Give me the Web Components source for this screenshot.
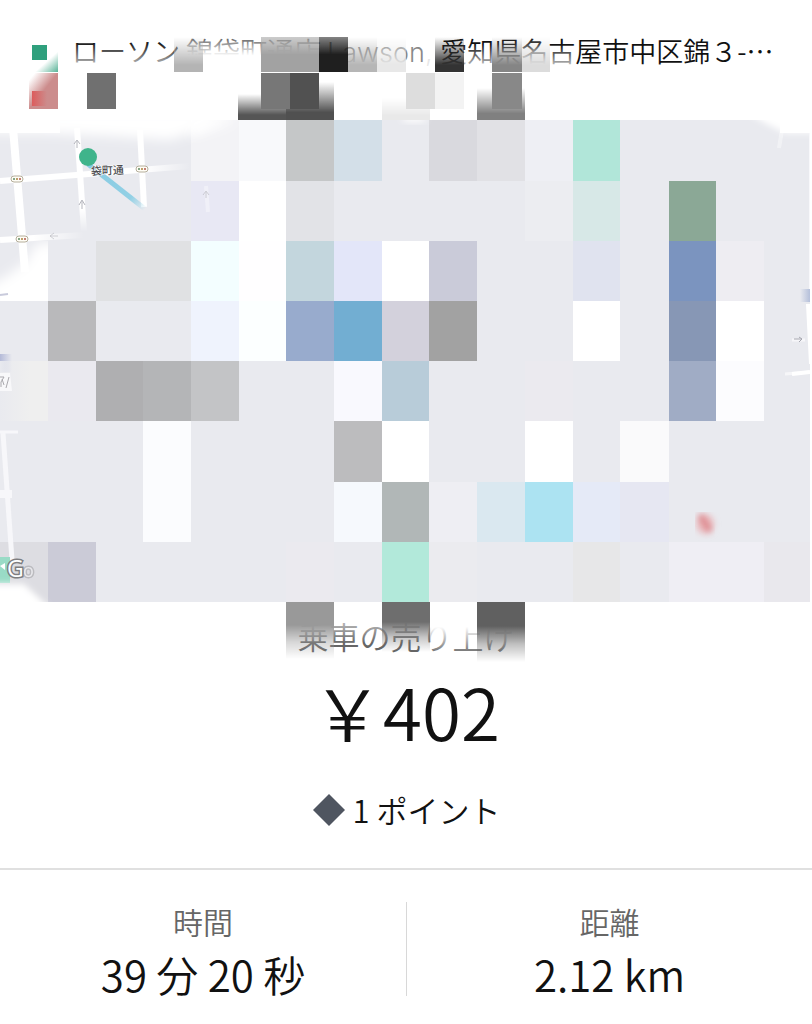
<!DOCTYPE html>
<html lang="ja">
<head>
<meta charset="utf-8">
<meta name="viewport" content="width=device-width, initial-scale=1">
<title>乗車の詳細</title>
<style>
body{
    margin: 0;
    background: #fff;
    color: #111;
    font-family: "Noto Sans CJK JP", sans-serif;
    font-weight: 350;
}
.latin{
    font-family: Inter, sans-serif;
    font-weight: 300;
}
</style>
</head>
<body>
<trip-page>
    <trip-stops slot="stops">ローソン 錦袋町通店 <span class="latin">Lawson, </span>愛知県名古屋市中区錦３-…</trip-stops>
    <trip-map slot="map" street="袋町通"></trip-map>
    <trip-fare slot="fare" label="乗車の売り上げ" amount="￥402">1 ポイント</trip-fare>
    <trip-metric label="時間">39 分 20 秒</trip-metric>
    <trip-metric label="距離">2.12 km</trip-metric>
</trip-page>

<script>
const pageStyle = `
:host{
    display: block;
}
.metrics{
    display: grid;
    grid-template-columns: 1fr 1fr;
    padding: 32px 0 28px;
    border-top: 2px solid #e0e0e0;
}
::slotted(trip-metric:last-of-type){
    border-left: 1px solid #d8d8d8;
}
`

class TripPage extends HTMLElement{
    constructor(){
        super();
        this._shadowroot = this.attachShadow({mode:'open'})
    }
    connectedCallback(){
        this._shadowroot.innerHTML = `
        <style>${pageStyle}</style>
        <main>
            <slot name="stops"></slot>
            <slot name="map"></slot>
            <slot name="fare"></slot>
            <div class="metrics"><slot></slot></div>
        </main>
        `
    }
}

const stopsStyle = `
:host{
    display: block;
    position: relative;
    box-sizing: border-box;
    min-height: 120px;
    padding: 31px 0 0 32px;
}
.stop{
    display: flex;
    align-items: center;
    gap: 25px;
    font-size: 27px;
    line-height: 40px;
}
.mark{
    flex: none;
    width: 15px;
    height: 15px;
    background: #2fa07d;
}
.name{
    white-space: nowrap;
}
.veil{
    position: absolute;
    left: 0;
    top: 0;
    width: 100%;
}
`

class TripStops extends HTMLElement{
    constructor(){
        super();
        this._shadowroot = this.attachShadow({mode:'open'})
    }
    connectedCallback(){
        // x, y, width, height, colour, fill type
        const cells = [
            [174, 37, 29, 35, '#b4b4b4', 'fade'],
            [261, 37, 58, 35, '#a2a2a2', 'half'],
            [319, 37, 29, 35, '#1f1f1f', 'half'],
            [348, 37, 29, 35, '#b6b6b6', 'fade'],
            [377, 37, 29, 35, '#e8e8e8', 'fade'],
            [435, 37, 29, 35, '#333333', 'fade'],
            [492, 37, 30, 35, '#858585', 'fade'],
            [522, 37, 28, 35, '#dcdcdc', 'fade'],
            [87, 73, 29, 36, '#707070', 'full'],
            [238, 94, 48, 26, '#555555', 'fade'],
            [286, 82, 48, 38, '#505050', 'fade'],
            [261, 73, 29, 36, '#777777', 'full'],
            [290, 73, 29, 36, '#515151', 'full'],
            [382, 98, 48, 22, '#e9e9e9', 'fade'],
            [406, 73, 29, 36, '#dddddd', 'full'],
            [435, 73, 29, 36, '#f3f3f3', 'full'],
            [477, 88, 48, 32, '#808080', 'fade'],
            [492, 73, 30, 36, '#888888', 'full']
        ]
        const masks = {fade:'url(#m-fade)', half:'url(#m-half)', full:'none'}
        this._shadowroot.innerHTML = `
        <style>${stopsStyle}</style>
        <div class="stop"><span class="mark"></span><span class="name"><slot></slot></span></div>
        <svg class="veil" viewBox="0 0 812 120" aria-hidden="true">
            <defs>
                <linearGradient id="g-fade" x1="0" y1="0" x2="0" y2="1">
                    <stop offset="0" stop-color="#fff" stop-opacity="0"/>
                    <stop offset=".8" stop-color="#fff"/>
                </linearGradient>
                <linearGradient id="g-half" x1="0" y1="0" x2="0" y2="1">
                    <stop offset="0" stop-color="#fff" stop-opacity=".55"/>
                    <stop offset=".5" stop-color="#fff"/>
                </linearGradient>
                <linearGradient id="g-white" x1="0" y1="0" x2="0" y2="1">
                    <stop offset="0" stop-color="#fff" stop-opacity=".2"/>
                    <stop offset=".9" stop-color="#fff"/>
                </linearGradient>
                <linearGradient id="g-low" x1="0" y1="0" x2="0" y2="1">
                    <stop offset="0" stop-color="#fff" stop-opacity="0"/>
                    <stop offset="1" stop-color="#fff" stop-opacity=".8"/>
                </linearGradient>
                <linearGradient id="g-green" x1="0" y1="0" x2="1" y2="1">
                    <stop offset=".6" stop-color="#2fa07d" stop-opacity="0"/>
                    <stop offset="1" stop-color="#2fa07d" stop-opacity=".8"/>
                </linearGradient>
                <linearGradient id="g-red" x1="0" y1="0" x2="1" y2="1">
                    <stop offset=".1" stop-color="#cc8c8c" stop-opacity="0"/>
                    <stop offset=".5" stop-color="#cc8c8c"/>
                </linearGradient>
                <linearGradient id="g-end" x1="0" y1="0" x2="1" y2="0">
                    <stop offset="0" stop-color="#dc5c5c"/>
                    <stop offset="1" stop-color="#cc8c8c"/>
                </linearGradient>
                <mask id="m-fade" maskContentUnits="objectBoundingBox"><rect width="1" height="1" fill="url(#g-fade)"/></mask>
                <mask id="m-half" maskContentUnits="objectBoundingBox"><rect width="1" height="1" fill="url(#g-half)"/></mask>
            </defs>
            <rect x="66" y="42" width="114" height="26" fill="url(#g-low)"/>
            <rect x="182" y="34" width="138" height="24" fill="url(#g-white)"/>
            <rect x="182" y="58" width="138" height="13" fill="#fff"/>
            <rect x="324" y="34" width="102" height="34" fill="#fff" opacity=".5"/>
            <rect x="426" y="34" width="9" height="38" fill="#fff" opacity=".9"/>
            <rect x="462" y="44" width="112" height="24" fill="url(#g-low)"/>
            <g shape-rendering="crispEdges">
            ${cells.map(c => `<rect x="${c[0]}" y="${c[1]}" width="${c[2]}" height="${c[3]}" fill="${c[4]}" mask="${masks[c[5]]}"/>`).join('')}
            <rect x="29" y="46" width="29" height="26" fill="url(#g-green)"/>
            <rect x="29" y="73" width="29" height="36" fill="url(#g-red)"/>
            <rect x="32" y="91" width="15" height="15" fill="url(#g-end)"/>
            </g>
        </svg>
        `
    }
}

const mapStyle = `
:host{
    display: block;
}
svg{
    display: block;
    width: 100%;
}
`

// 17 columns, 8 rows; an empty cell leaves the map open
const land = '#e9eaef'
const tiles = [
    {4:'#f3f3f6', 5:'#f8f9fb', 6:'#c5c7c8', 7:'#d3dfe8', 9:'#d9d9de', 10:'#e1e1e5', 11:'#eeeff4', 12:'#b1e6d9'},
    {5:'#ffffff', 6:'#e2e3e7', 11:'#ecedf1', 12:'#d7e8e7', 14:'#8ba896'},
    {1:land, 2:'#e0e1e3', 3:'#e0e1e3', 4:'#f3feff', 5:'#fffeff', 6:'#c3d6dd', 7:'#e3e6f9', 8:'#ffffff', 9:'#cacbd9', 12:'#e0e3ef', 14:'#7b94bf', 15:'#eeedf2'},
    {0:land, 1:'#b9b9bb', 4:'#eff3fd', 5:'#fcffff', 6:'#98abcd', 7:'#72aed2', 8:'#d3d1dc', 9:'#a2a2a2', 12:'#ffffff', 14:'#8797b5', 15:'#ffffff'},
    {0:'#efefef', 1:'#eae9ef', 2:'#afafb1', 3:'#b4b5b7', 4:'#c3c4c6', 7:'#f9f9fe', 8:'#b8ccd9', 11:'#ebeaef', 14:'#a0acc5', 15:'#fcfcfe'},
    {3:'#fbfcfe', 7:'#bcbcbe', 8:'#ffffff', 11:'#ffffff', 13:'#fafafb'},
    {3:'#fbfcfe', 7:'#f6f9fd', 8:'#b1b7b7', 9:'#eeeef3', 10:'#dae8f0', 11:'#ace3f2', 12:'#e5eaf7', 13:'#e6e7f2'},
    {0:'#dddde2', 1:'#cbcbd7', 6:'#ebeaef', 8:'#b2e9da', 9:'#ebebef', 12:'#e7e7e8', 14:'#efeef4', 15:'#efeef4', 16:'#e9e8ed'}
]
const colX = [0, 48, 96, 143, 191, 239, 286, 334, 382, 429, 477, 525, 573, 620, 669, 716, 764, 810]
const rowY = [0, 61, 121, 181, 241, 301, 362, 422, 482]

class TripMap extends HTMLElement{
    constructor(){
        super();
        this._shadowroot = this.attachShadow({mode:'open'})
    }
    drawTiles(){
        let out = ''
        tiles.forEach((row, r) => {
            for(const c in row){
                const i = Number(c)
                out += `<rect x="${colX[i]}" y="${rowY[r]}" width="${colX[i + 1] - colX[i]}" height="${rowY[r + 1] - rowY[r]}" fill="${row[c]}"/>`
            }
        })
        return out
    }
    drawSignal(x, y){
        return `<g transform="translate(${x} ${y})">
            <rect x="-6" y="-3" width="12" height="6" rx="3" fill="#fffdf6" stroke="#b5ae9c"/>
            <circle cx="-3" r="1" fill="#5b8a62"/><circle r="1" fill="#a8803c"/><circle cx="3" r="1" fill="#b0564c"/>
        </g>`
    }
    connectedCallback(){
        this.street = this.getAttribute('street')
        this._shadowroot.innerHTML = `
        <style>${mapStyle}</style>
        <svg viewBox="0 0 812 482" role="img" aria-label="${this.street}">
            <defs>
                <filter id="soft" x="-50%" y="-50%" width="200%" height="200%"><feGaussianBlur stdDeviation="6"/></filter>
                <filter id="thin" x="-50%" y="-50%" width="200%" height="200%"><feGaussianBlur stdDeviation="3"/></filter>
                <linearGradient id="route" gradientUnits="userSpaceOnUse" x1="88" y1="44" x2="145" y2="89">
                    <stop offset="0" stop-color="#86cbe2"/><stop offset=".75" stop-color="#92d0e5"/><stop offset="1" stop-color="#92d0e5" stop-opacity="0"/>
                </linearGradient>
                <linearGradient id="street" gradientUnits="userSpaceOnUse" x1="0" y1="0" x2="190" y2="0">
                    <stop offset=".75" stop-color="#fff"/><stop offset="1" stop-color="#fff" stop-opacity="0"/>
                </linearGradient>
                <linearGradient id="lane" gradientUnits="userSpaceOnUse" x1="0" y1="0" x2="84" y2="0">
                    <stop offset=".4" stop-color="#fff"/><stop offset="1" stop-color="#fff" stop-opacity="0"/>
                </linearGradient>
                <linearGradient id="fall" gradientUnits="userSpaceOnUse" x1="0" y1="0" x2="0" y2="112">
                    <stop offset=".8" stop-color="#fff"/><stop offset="1" stop-color="#fff" stop-opacity="0"/>
                </linearGradient>
                <linearGradient id="edge" x1="0" y1="0" x2="1" y2="0">
                    <stop offset="0" stop-color="${land}"/><stop offset="1" stop-color="${land}" stop-opacity="0"/>
                </linearGradient>
                <linearGradient id="blue" x1="0" y1="0" x2="1" y2="0">
                    <stop offset="0" stop-color="#b4bad8"/><stop offset="1" stop-color="#b4bad8" stop-opacity="0"/>
                </linearGradient>
                <linearGradient id="blueright" x1="1" y1="0" x2="0" y2="0">
                    <stop offset="0" stop-color="#b4bfda"/><stop offset="1" stop-color="#b4bfda" stop-opacity="0"/>
                </linearGradient>
                <clipPath id="frame"><rect width="810" height="482"/></clipPath>
                <clipPath id="corner"><rect y="121" width="48" height="60"/></clipPath>
                <clipPath id="pin"><rect x="695" y="392" width="40" height="40"/></clipPath>
            </defs>
            <g clip-path="url(#frame)">
                <rect width="810" height="482" fill="${land}"/>
                <g fill="none" stroke="#fff">
                    <path d="M13 8 25 152" stroke-width="8"/>
                    <path d="M77 8 84 112" stroke-width="6" stroke="url(#fall)"/>
                    <path d="M140 10 144 87" stroke-width="6" stroke="url(#fall)"/>
                    <path d="M0 61 190 46" stroke-width="6" stroke="url(#street)"/>
                    <path d="M0 120 84 115" stroke-width="6" stroke="url(#lane)"/>
                </g>
                <rect x="191" y="61" width="48" height="60" fill="#e8e8f4"/>
                <path d="M206 66 208 92" stroke="#f0f0f8" stroke-width="4"/>
                <g shape-rendering="crispEdges">${this.drawTiles()}</g>
                <g clip-path="url(#corner)">
                    <path d="M60 122 36 124 26 142 4 158-10 164V200H60Z" fill="#fff" filter="url(#soft)"/>
                    <path d="M0 175 8 174" stroke="#c9cbdc" stroke-width="2"/>
                </g>

                <path d="M-10 -10H240L200 10 170 20 110 16 45 13H-10Z" fill="#fff" filter="url(#soft)"/>
                <path d="M191 0H239L191 16Z" fill="#fff" filter="url(#soft)"/>
                <rect width="60" height="13" fill="#fff"/>
                <path d="M740 -12H820V13H785L765 3Z" fill="#fff" filter="url(#thin)"/>
                <rect x="780" width="32" height="13" fill="#fff"/>
                <ellipse cx="414" cy="-1" rx="13" ry="3" fill="#fff" filter="url(#thin)"/>
                <path d="M782 10 779 28" stroke="#fff" stroke-width="4" opacity=".4"/>
                <rect x="809" y="13" width="1" height="168" fill="#f8f8fb"/>

                <path d="M88 44 145 89" stroke="url(#route)" stroke-width="5"/>
                <circle cx="88" cy="37" r="9" fill="#3fb48b"/>
                ${this.drawSignal(17, 59)}
                ${this.drawSignal(22, 119)}
                ${this.drawSignal(142, 49)}
                <text x="91" y="55" font-size="11" font-weight="500" fill="#4c4c50" stroke="#fff" stroke-width="1" paint-order="stroke" transform="rotate(-2 91 55)">${this.street}</text>
                <g fill="none" stroke="#b5b6bd" stroke-width="1">
                    <path d="M77 28V21M74 24 77 20 80 24M82 89V81M79 85 82 80 85 85"/>
                    <path d="M206 78V72M203 75 206 71 209 75M58 116H50M54 113 50 116 54 119" opacity=".6"/>
                </g>

                <rect y="234" width="12" height="18" fill="url(#blue)"/>
                <rect y="241" width="30" height="60" fill="url(#edge)"/>
                <path d="M0 253H10L12 271H0Z" fill="#f8f8fa"/>
                <path d="M0 257H4L1 262V267M6 268 9 257M2 259 4 265" fill="none" stroke="#aaa9ae"/>
                <g fill="none" stroke="#f7f7fa">
                    <path d="M3 313 12 440" stroke-width="5"/>
                    <path d="M0 312H18" stroke-width="3"/>
                    <path d="M0 374H12" stroke-width="8"/>
                </g>

                <rect y="437" width="10" height="26" fill="#99dbc6"/>
                <path d="M0 446 5 443V450Z" fill="#fff"/>
                <path d="M-10 464H24L52 490H-10Z" fill="#fff" filter="url(#thin)"/>
                <g font-family="Open Sans" fill="#fff" stroke="#7d7d80" stroke-width="3" paint-order="stroke">
                    <text x="7" y="457" font-size="23" font-weight="400">G</text>
                    <text x="23" y="457" font-size="18" font-weight="400" opacity=".35">o</text>
                </g>

                <path d="M785 254 810 252" stroke="#fff" stroke-width="3" opacity=".6"/>
                <path d="M792 254 810 252M808 184 811 244" stroke="#fff" stroke-width="4"/>
                <path d="M792 220H805" stroke="#f6f6f9" stroke-width="3"/>
                <path d="M794 219H802M799 217 802 219 799 222" fill="none" stroke="#a7a8b1"/>
                <rect x="800" y="169" width="10" height="13" fill="url(#blueright)"/>
                <g clip-path="url(#pin)">
                    <ellipse cx="705" cy="404" rx="9" ry="10" fill="#e9b9bd" filter="url(#thin)"/>
                    <path d="M700 395 710 411" stroke="#d8757a" stroke-width="4" filter="url(#thin)"/>
                </g>
            </g>
        </svg>
        `
    }
}

const fareStyle = `
:host{
    display: block;
    position: relative;
    padding: 14px 0 36px;
    text-align: center;
}
.label{
    color: #666;
    font-size: 31px;
    line-height: 40px;
}
.amount{
    margin-top: 12px;
    font-size: 71px;
    line-height: 84px;
}
.points{
    display: flex;
    justify-content: center;
    align-items: center;
    gap: 7px;
    margin-top: 36px;
    font-size: 31px;
    line-height: 44px;
}
.points svg{
    width: 34px;
    height: 34px;
}
.veil{
    position: absolute;
    left: 0;
    top: 0;
    width: 100%;
}
`

class TripFare extends HTMLElement{
    constructor(){
        super();
        this._shadowroot = this.attachShadow({mode:'open'})
    }
    connectedCallback(){
        this.label = this.getAttribute('label')
        this.amount = this.getAttribute('amount')
        this._shadowroot.innerHTML = `
        <style>${fareStyle}</style>
        <div class="label">${this.label}</div>
        <div class="amount">${this.amount}</div>
        <div class="points">
            <svg viewBox="0 0 34 34" aria-hidden="true"><path d="M17 1 33 17 17 33 1 17Z" fill="#4f5560"/></svg>
            <span><slot></slot></span>
        </div>
        <svg class="veil" viewBox="0 0 812 66" aria-hidden="true">
            <defs>
                <linearGradient id="down" x1="0" y1="0" x2="0" y2="1">
                    <stop offset=".4" stop-color="#fff"/><stop offset=".7" stop-color="#fff" stop-opacity=".4"/><stop offset="1" stop-color="#fff" stop-opacity="0"/>
                </linearGradient>
                <linearGradient id="white" x1="0" y1="0" x2="0" y2="1">
                    <stop offset=".3" stop-color="#fff"/><stop offset="1" stop-color="#fff" stop-opacity=".1"/>
                </linearGradient>
                <mask id="cell" maskContentUnits="objectBoundingBox"><rect width="1" height="1" fill="url(#down)"/></mask>
            </defs>
            <rect x="290" y="14" width="140" height="26" fill="url(#white)" opacity=".5"/>
            <rect x="430" y="14" width="84" height="36" fill="url(#white)"/>
            <rect x="286" width="48" height="57" fill="#999999" mask="url(#cell)"/>
            <rect x="382" width="48" height="50" fill="#6e6e6e" mask="url(#cell)"/>
            <rect x="477" width="48" height="60" fill="#606060" mask="url(#cell)"/>
        </svg>
        `
    }
}

const metricStyle = `
:host{
    display: block;
    text-align: center;
}
dl{
    margin: -3px 0 -8px;
}
dt{
    color: #666;
    font-size: 30px;
    line-height: 44px;
}
dd{
    margin: 0;
    font-size: 42px;
    line-height: 61px;
}
`

class TripMetric extends HTMLElement{
    constructor(){
        super();
        this._shadowroot = this.attachShadow({mode:'open'})
    }
    connectedCallback(){
        this.label = this.getAttribute('label')
        this._shadowroot.innerHTML = `
        <style>${metricStyle}</style>
        <dl>
            <dt>${this.label}</dt>
            <dd><slot></slot></dd>
        </dl>
        `
    }
}

window.customElements.define('trip-page',TripPage)
window.customElements.define('trip-stops',TripStops)
window.customElements.define('trip-map',TripMap)
window.customElements.define('trip-fare',TripFare)
window.customElements.define('trip-metric',TripMetric)
</script>
</body>
</html>
